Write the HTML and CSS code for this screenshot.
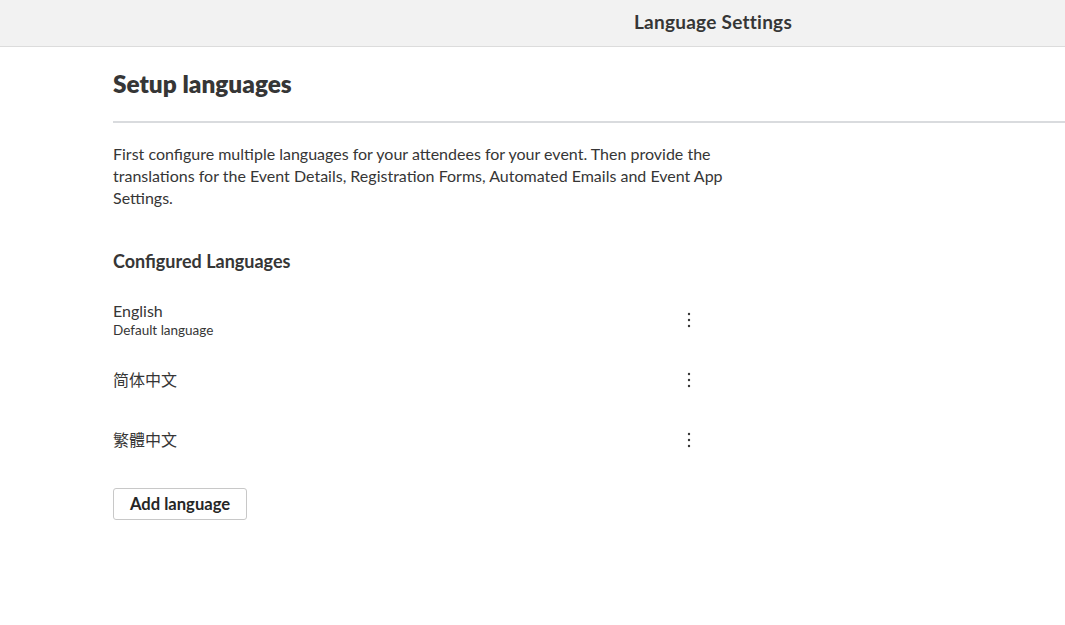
FILE: index.html
```html
<!DOCTYPE html>
<html lang="en">
<head>
<meta charset="utf-8">
<title>Language Settings</title>
<link rel="stylesheet" href="styles.css">
</head>
<body>
<header class="topbar">
  <h1 class="topbar-title">Language Settings</h1>
</header>
<main class="page">
  <h2 class="page-title">Setup languages</h2>
  <hr class="divider">
  <p class="intro">First configure multiple languages for your attendees for your event. Then provide the translations for the Event Details, Registration Forms, Automated Emails and Event App Settings.</p>
  <h3 class="section-title">Configured Languages</h3>
  <ul class="lang-list">
    <li class="lang-row">
      <div class="lang-info">
        <div class="lang-name">English</div>
        <div class="lang-note">Default language</div>
      </div>
      <button class="kebab" aria-label="More"><svg width="4" height="16" viewBox="0 0 4 16"><circle cx="2" cy="2" r="1.2"/><circle cx="2" cy="8" r="1.2"/><circle cx="2" cy="14" r="1.2"/></svg></button>
    </li>
    <li class="lang-row">
      <div class="lang-info">
        <div class="lang-name">简体中文</div>
      </div>
      <button class="kebab" aria-label="More"><svg width="4" height="16" viewBox="0 0 4 16"><circle cx="2" cy="2" r="1.2"/><circle cx="2" cy="8" r="1.2"/><circle cx="2" cy="14" r="1.2"/></svg></button>
    </li>
    <li class="lang-row">
      <div class="lang-info">
        <div class="lang-name">繁體中文</div>
      </div>
      <button class="kebab" aria-label="More"><svg width="4" height="16" viewBox="0 0 4 16"><circle cx="2" cy="2" r="1.2"/><circle cx="2" cy="8" r="1.2"/><circle cx="2" cy="14" r="1.2"/></svg></button>
    </li>
  </ul>
  <button class="add-btn">Add language</button>
</main>
</body>
</html>
```
FILE: styles.css
```css
* { box-sizing: border-box; }
body {
  margin: 0;
  font-family: Lato, "Noto Sans CJK SC", sans-serif;
  color: #363636;
  background: #fff;
}
.topbar {
  height: 47px;
  background: #f2f2f2;
  border-bottom: 1px solid #dcdcdc;
  display: flex;
  align-items: center;
  padding-left: 634px;
}
.topbar-title {
  margin: 0 0 4px;
  font-size: 19px;
  font-weight: 700;
  letter-spacing: 0.25px;
  color: #363636;
}
.page {
  padding-left: 113px;
}
.page-title {
  margin: 22px 0 0;
  font-size: 24.4px;
  line-height: 30px;
  font-weight: 800;
  color: #363636;
}
.divider {
  margin: 22px 0 0;
  border: 0;
  height: 2px;
  background: #d9dbde;
}
.intro {
  margin: 20px 0 0;
  max-width: 620px;
  font-size: 16px;
  line-height: 22px;
}
.section-title {
  margin: 40px 0 0;
  font-size: 18px;
  line-height: 24px;
  font-weight: 700;
}
.lang-list {
  list-style: none;
  margin: 17px 0 0;
  padding: 0;
  width: 588px;
}
.lang-row {
  height: 60px;
  display: flex;
  align-items: center;
  justify-content: space-between;
}
.lang-name {
  font-size: 16px;
  line-height: 20px;
  font-family: Lato, "Noto Sans CJK SC", "Noto Sans CJK TC", sans-serif;
}
.lang-note {
  font-size: 13.5px;
  line-height: 18px;
}
.kebab {
  width: 24px;
  height: 24px;
  padding: 0;
  border: 0;
  background: none;
  display: flex;
  align-items: center;
  justify-content: center;
}
.kebab svg { fill: #363636; }
.add-btn {
  margin-top: 18px;
  height: 32px;
  padding: 0 16px;
  border: 1px solid #c8c8c8;
  border-radius: 3px;
  background: #fff;
  font-family: Lato, sans-serif;
  font-size: 16.6px;
  font-weight: 700;
  color: #262626;
}
```
